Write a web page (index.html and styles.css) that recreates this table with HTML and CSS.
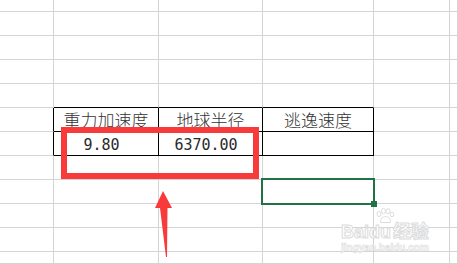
FILE: index.html
```html
<!DOCTYPE html>
<html>
<head>
<meta charset="utf-8">
<link rel="stylesheet" href="styles.css">
</head>
<body>
<div class="sheet">
  <div class="c"></div><div class="c"></div><div class="c"></div><div class="c"></div><div class="c"></div><div class="c"></div>
  <div class="c"></div><div class="c"></div><div class="c"></div><div class="c"></div><div class="c"></div><div class="c"></div>
  <div class="c"></div><div class="c"></div><div class="c"></div><div class="c"></div><div class="c"></div><div class="c"></div>
  <div class="c"></div><div class="c"></div><div class="c"></div><div class="c"></div><div class="c"></div><div class="c"></div>
  <div class="c"></div><div class="c tb"></div><div class="c tb"></div><div class="c tb"></div><div class="c"></div><div class="c"></div>
  <div class="c tr"></div><div class="c tx tr tb head">重力加速度</div><div class="c tx tr tb head">地球半径</div><div class="c tx tr tb head">逃逸速度</div><div class="c"></div><div class="c"></div>
  <div class="c tr"></div><div class="c tx tr tb num">9.80</div><div class="c tx tr tb num">6370.00</div><div class="c tr tb"></div><div class="c"></div><div class="c"></div>
  <div class="c"></div><div class="c"></div><div class="c"></div><div class="c"></div><div class="c"></div><div class="c"></div>
  <div class="c"></div><div class="c"></div><div class="c"></div><div class="c"></div><div class="c"></div><div class="c"></div>
  <div class="c"></div><div class="c"></div><div class="c"></div><div class="c"></div><div class="c"></div><div class="c"></div>
  <div class="c"></div><div class="c"></div><div class="c"></div><div class="c"></div><div class="c"></div><div class="c"></div>
  <div class="c"></div><div class="c"></div><div class="c"></div><div class="c"></div><div class="c"></div><div class="c"></div>
</div>
<div class="highlight"></div>
<div class="selection"><span class="handle"></span></div>
<svg class="arrow" width="24" height="70" viewBox="0 0 24 70">
  <polygon points="9,1 18,18 13.5,18 13,67 12,67 6,18 1,18" fill="#f83a3a"/>
</svg>
<div class="watermark">
  <svg class="paw" width="20" height="15" viewBox="0 0 20 15">
    <g fill="#fff" stroke="#ddd" stroke-width="1">
      <ellipse cx="4" cy="6" rx="2" ry="2.6"/>
      <ellipse cx="8.5" cy="3" rx="2" ry="2.6"/>
      <ellipse cx="13" cy="3.2" rx="2" ry="2.6"/>
      <ellipse cx="17" cy="6.5" rx="1.8" ry="2.3"/>
      <path d="M5.5 14.5 C5 11 8 8.5 10.5 8.5 C13 8.5 16 11 15.5 14.5 Z"/>
    </g>
  </svg>
  <div class="wm1">Bai<span class="du">du</span>经验</div>
  <div class="wm2">jingyan.baidu.com</div>
</div>
</body>
</html>
```
FILE: styles.css
```css
html, body {
  margin: 0;
  padding: 0;
  background: #fff;
  overflow: hidden;
}
body {
  width: 458px;
  height: 264px;
  position: relative;
  font-family: "Noto Sans CJK SC", sans-serif;
}
.sheet {
  display: grid;
  grid-template-columns: 54px 105px 104px 111px 76px 8px;
  grid-template-rows: 12px repeat(10, 24px) 12px;
}
.c {
  box-sizing: border-box;
  border-right: 1px solid #d4d4d4;
  border-bottom: 1px solid #d4d4d4;
}
.c.tb { border-bottom-color: #000; }
.c.tr { border-right-color: #000; }
.tx {
  display: flex;
  justify-content: center;
  align-items: center;
  white-space: nowrap;
}
.head {
  font-size: 17px;
  font-weight: 300;
  line-height: 23px;
  color: #333;
}
.num {
  font-family: "DejaVu Sans Mono", monospace;
  font-size: 15px;
  line-height: 23px;
  padding: 3px 9px 0 0;
  color: #2a2a2a;
}
.highlight {
  position: absolute;
  left: 61px;
  top: 127px;
  width: 198px;
  height: 52px;
  box-sizing: border-box;
  border: 6px solid #f83a3a;
}
.selection {
  position: absolute;
  left: 261px;
  top: 178px;
  width: 114px;
  height: 27px;
  box-sizing: border-box;
  border: 2px solid #217346;
}
.handle {
  position: absolute;
  right: -4px;
  bottom: -4px;
  width: 6px;
  height: 6px;
  background: #217346;
}
.arrow {
  position: absolute;
  left: 154px;
  top: 190px;
}
.watermark {
  position: absolute;
  left: 341px;
  top: 208px;
  width: 100px;
  color: #fff;
  font-family: "Liberation Sans", sans-serif;
  font-weight: bold;
}
.paw {
  display: block;
  margin-left: 34px;
}
.wm1 {
  font-size: 18px;
  line-height: 18px;
  -webkit-text-stroke: 1px #dcdcdc;
  white-space: nowrap;
  font-family: "Liberation Sans", "Noto Sans CJK SC", sans-serif;
}
.du {
  margin-right: 2px;
}
.wm2 {
  font-size: 10px;
  line-height: 12px;
  margin-top: 1px;
  -webkit-text-stroke: 0.6px #dcdcdc;
  white-space: nowrap;
}
```
